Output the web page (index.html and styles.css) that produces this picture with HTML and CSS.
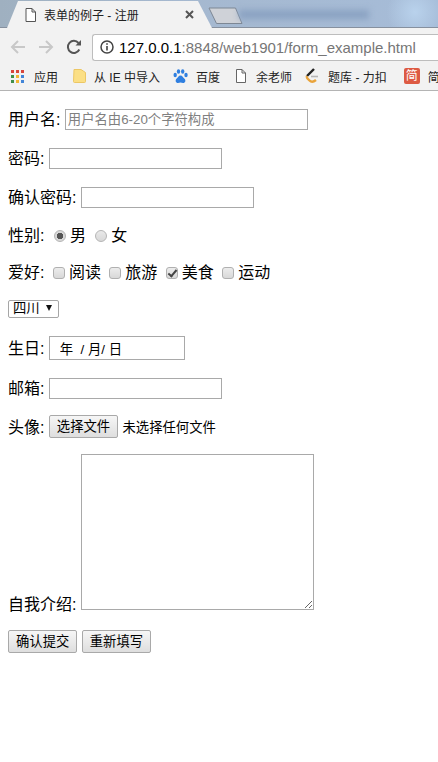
FILE: index.html
```html
<!DOCTYPE html>
<html lang="zh-CN">
<head>
    <meta charset="UTF-8">
    <meta name="viewport" content="width=device-width, initial-scale=1.0">
    <title>表单的例子 - 注册</title>
    <link rel="stylesheet" href="styles.css">
</head>
<body>
    <div class="tabstrip">
        <div class="tab">
            <svg class="tab-icon" width="11" height="14" viewBox="0 0 11 14"><path d="M1 .5h6l3.500 3.500v9.500h-9.500z M7 .5v3.500h3.500" fill="#fff" stroke="#555"/></svg>
            <span class="tab-title">表单的例子 - 注册</span>
            <svg class="tab-close" width="9" height="9" viewBox="0 0 9 9"><path d="M1 1l7 7M8 1l-7 7" stroke="#555" stroke-width="2"/></svg>
        </div>
        <svg class="new-tab" width="35" height="18" viewBox="0 0 35 18"><path d="M1 1h26.500L34 16.500H8.500z" fill="#cfd2d8" stroke="#7d8794"/></svg>
        <div class="blur-title"></div>
    </div>

    <div class="toolbar">
        <svg class="nav-icon" width="16" height="16" viewBox="0 0 16 16"><path d="M15 8H2.500M8 2L2 8l6 6" fill="none" stroke="#c8c8c8" stroke-width="2"/></svg>
        <svg class="nav-icon" width="16" height="16" viewBox="0 0 16 16"><path d="M1 8h12.500M8 2l6 6-6 6" fill="none" stroke="#c8c8c8" stroke-width="2"/></svg>
        <svg class="nav-icon nav-reload" width="16" height="16" viewBox="0 0 16 16"><path d="M13.300 10.500A6 6 0 1 1 12.500 4" fill="none" stroke="#555" stroke-width="2"/><path d="M9.500 6.500H15V1z" fill="#555"/></svg>
        <div class="omnibox">
            <svg class="info-icon" width="14" height="14" viewBox="0 0 14 14"><circle cx="7" cy="7" r="6" fill="none" stroke="#444" stroke-width="1.500"/><path d="M7 6v4.500M7 3.200v1.600" stroke="#444" stroke-width="1.600"/></svg>
            <span class="url"><span class="url-host">127.0.0.1</span>:8848/web1901/form_example.html</span>
        </div>
    </div>

    <div class="bookmarks">
        <div class="bookmark apps">
            <svg width="13" height="13" viewBox="0 0 13 13">
                <rect width="3" height="3" fill="#d9463b"/><rect x="5" width="3" height="3" fill="#d9463b"/><rect x="10" width="3" height="3" fill="#d9463b"/>
                <rect y="5" width="3" height="3" fill="#3f8f4a"/><rect x="5" y="5" width="3" height="3" fill="#f2b632"/><rect x="10" y="5" width="3" height="3" fill="#4285d8"/>
                <rect y="10" width="3" height="3" fill="#3f8f4a"/><rect x="5" y="10" width="3" height="3" fill="#f2b632"/><rect x="10" y="10" width="3" height="3" fill="#4285d8"/>
            </svg>
            <span>应用</span>
        </div>
        <div class="bookmark folder">
            <svg width="13" height="15" viewBox="0 0 13 15"><path d="M1 .5h7l4.500 3v9a1 1 0 0 1-1 1H1.500a1 1 0 0 1-1-1z" fill="#fbdf85" stroke="#ecc765"/></svg>
            <span>从 IE 中导入</span>
        </div>
        <div class="bookmark baidu">
            <svg width="15" height="15" viewBox="0 0 15 15" fill="#2f7fe0"><ellipse cx="2.200" cy="6" rx="1.700" ry="2.200"/><ellipse cx="5.500" cy="2.500" rx="1.700" ry="2.300"/><ellipse cx="9.700" cy="2.500" rx="1.700" ry="2.300"/><ellipse cx="13" cy="6" rx="1.700" ry="2.200"/><path d="M7.500 6.500c-2 0-2.500 2-4 3.200C2 11 2.500 14 5 14c1 0 1.600-.4 2.500-.4s1.500.4 2.500.4c2.500 0 3-3 1.500-4.300-1.500-1.200-2-3.200-4-3.200z"/></svg>
            <span>百度</span>
        </div>
        <div class="bookmark page">
            <svg width="10" height="14" viewBox="0 0 10 14"><path d="M.5.500h5.500l3.500 3.500v9.500h-9z M6 .5V4h3.500" fill="#fff" stroke="#666"/></svg>
            <span>余老师</span>
        </div>
        <div class="bookmark leetcode">
            <svg width="14" height="16" viewBox="0 0 14 16" fill="none"><path d="M9 1L2 8" stroke="#222" stroke-width="2.400"/><path d="M2 8c0 0-.5 1 .5 2.500l2 2c1.500 1.500 4 1.500 6.500-.5" stroke="#e9a33a" stroke-width="2.400"/><path d="M6 8.500h7" stroke="#b5b5b5" stroke-width="1.600"/></svg>
            <span>题库 - 力扣</span>
        </div>
        <div class="bookmark jian">
            <span class="jian-icon">简</span>
            <span>简</span>
        </div>
    </div>

    <form class="signup">
        <p class="row row-text"><label for="username">用户名:</label><input class="field field-wide" type="text" id="username" placeholder="用户名由6-20个字符构成"></p>
        <p class="row row-text"><label for="password">密码:</label><input class="field" type="password" id="password"></p>
        <p class="row row-text"><label for="confirm">确认密码:</label><input class="field" type="password" id="confirm"></p>
        <p class="row row-check">性别: <input class="radio" type="radio" name="sex" checked>男 <input class="radio" type="radio" name="sex">女</p>
        <p class="row row-check">爱好: <input class="check" type="checkbox">阅读 <input class="check" type="checkbox">旅游 <input class="check" type="checkbox" checked>美食 <input class="check" type="checkbox">运动</p>
        <p class="row row-select">
            <span class="select-wrap">
                <select class="province">
                    <option>四川</option>
                    <option>北京</option>
                </select>
            </span>
        </p>
        <p class="row row-date"><label for="birthday">生日:</label><input class="field field-date" type="text" id="birthday" value="年  / 月/ 日"></p>
        <p class="row row-text row-email"><label for="email">邮箱:</label><input class="field" type="email" id="email"></p>
        <p class="row row-file"><span class="file-label">头像:</span><button class="btn" type="button">选择文件</button><span class="file-name">未选择任何文件</span></p>
        <p class="row row-intro"><label for="intro">自我介绍:</label> <textarea class="intro" id="intro"></textarea></p>
        <p class="row row-buttons"><button class="btn" type="submit">确认提交</button> <button class="btn" type="reset">重新填写</button></p>
    </form>
</body>
</html>
```
FILE: styles.css
```css
html, body {
    height: 100%;
}
body {
    margin: 0;
    overflow: hidden;
    background-color: #fff;
    color: #000;
    font-family: "Liberation Sans", "Noto Sans CJK SC", sans-serif;
    font-size: 16px;
}

/* browser frame */
.tabstrip {
    display: flex;
    height: 28px;
    overflow: hidden;
    background:
        radial-gradient(circle at 415px 12px, #b9d2ec 0, rgba(185, 210, 236, 0) 28px),
        linear-gradient(90deg, #9fb0c0 0%, #a5b8cf 40%, #a6bcd8 100%);
    box-shadow: inset 0 -1px 0 #86909e;
}
.tab {
    display: flex;
    align-items: center;
    flex: none;
    box-sizing: border-box;
    width: 205px;
    margin-left: 7px;
    margin-top: 1px;
    padding-left: 18px;
    background-color: #f2f2f2;
    clip-path: polygon(0 100%, 11px 0, 191px 0, 100% 100%);
}
.tab-icon {
    flex: none;
}
.tab-title {
    margin-left: 8px;
    font-size: 12px;
    white-space: nowrap;
    color: #222;
}
.tab-close {
    margin-left: auto;
    margin-right: 18px;
}
.new-tab {
    flex: none;
    margin: 7px 0 0 -4px;
}
.blur-title {
    flex: none;
    width: 130px;
    height: 9px;
    margin: 10px 0 0 -4px;
    background-color: #8aa2c2;
    filter: blur(3px);
}
.toolbar {
    display: flex;
    align-items: center;
    box-sizing: border-box;
    height: 34px;
    padding: 4px 0 0 10px;
    background-color: #f2f2f2;
}
.nav-icon {
    flex: none;
    margin-right: 12px;
}
.nav-reload {
    margin-right: 10px;
}
.omnibox {
    display: flex;
    align-items: center;
    flex: none;
    box-sizing: border-box;
    width: 346px;
    height: 27px;
    padding-left: 7px;
    background-color: #fff;
    border: 1px solid #bdbdbd;
    border-right: none;
    border-radius: 3px 0 0 3px;
}
.info-icon {
    flex: none;
}
.url {
    margin-left: 5px;
    font-size: 15px;
    color: #767676;
    white-space: nowrap;
}
.url-host {
    color: #000;
}
.bookmarks {
    display: flex;
    align-items: center;
    box-sizing: border-box;
    height: 29px;
    overflow: hidden;
    background-color: #f2f2f2;
    border-bottom: 1px solid #b4b4b4;
    font-size: 12px;
    color: #222;
    white-space: nowrap;
}
.bookmark {
    display: flex;
    align-items: center;
    flex: none;
}
.apps {
    margin-left: 11px;
    gap: 10px;
}
.folder {
    margin-left: 15px;
    gap: 8px;
}
.baidu {
    margin-left: 13px;
    gap: 8px;
}
.page {
    margin-left: 16px;
    gap: 10px;
}
.leetcode {
    margin-left: 13px;
    gap: 9px;
}
.jian {
    margin-left: 17px;
    gap: 8px;
}
.jian-icon {
    width: 16px;
    height: 16px;
    border-radius: 2px;
    background-color: #dd5a43;
    color: #fff;
    font-size: 12px;
    line-height: 16px;
    text-align: center;
}

/* the form itself */
.signup {
    padding: 18px 8px 0;
}
.row {
    display: block;
    margin: 0 0 18px;
    white-space: nowrap;
}
.row-text, .row-date, .row-file {
    display: flex;
    align-items: center;
    gap: 4.400px;
}
.row-text label {
    margin-bottom: 3px;
}
.row-date label, .file-label {
    margin-bottom: 2px;
}
.row-text {
    height: 21px;
}
.row-email {
    margin-bottom: 16px;
}
.row-check {
    height: 19px;
    line-height: 19px;
}
.row-select {
    height: 18px;
    line-height: 18px;
}
.row-date {
    height: 24px;
}
.row-file {
    height: 23px;
    margin-bottom: 16px;
}
.row-intro {
    height: 156px;
    margin-bottom: 20px;
}
.row-buttons {
    height: 23px;
}
.field {
    box-sizing: border-box;
    width: 173px;
    height: 21px;
    padding: 1px 2px;
    border: 1px solid #a9a9a9;
    border-radius: 0;
    outline: none;
    font-family: inherit;
    font-size: 13.333px;
}
.field::placeholder {
    color: #808080;
}
.field-wide {
    width: 243px;
}
.field-date {
    width: 136px;
    height: 24px;
    padding-left: 10px;
}
.radio {
    appearance: none;
    box-sizing: border-box;
    width: 12px;
    height: 12px;
    margin: 0 4px 0 5px;
    border: 1px solid #b5b5b5;
    border-radius: 50%;
    background: linear-gradient(#e9e9e9, #d8d8d8);
    vertical-align: -1px;
}
.radio:checked {
    background: radial-gradient(circle, #555 0 3px, #d8d8d8 3.500px);
}
.check {
    appearance: none;
    position: relative;
    box-sizing: border-box;
    width: 12px;
    height: 12px;
    margin: 0 4px;
    border: 1px solid #b0b0b0;
    border-radius: 3px;
    background: linear-gradient(#ececec, #d8d8d8);
    vertical-align: -1px;
}
.check:checked::after {
    content: "";
    position: absolute;
    left: 3px;
    top: 0;
    width: 3px;
    height: 7px;
    border: solid #444;
    border-width: 0 2px 2px 0;
    transform: rotate(40deg);
}
.select-wrap {
    position: relative;
    display: inline-block;
    height: 18px;
    vertical-align: top;
}
.select-wrap::after {
    content: "";
    position: absolute;
    left: 38px;
    top: 5px;
    border-style: solid;
    border-width: 6px 3.500px 0;
    border-color: #111 transparent transparent;
}
.province {
    appearance: none;
    display: block;
    box-sizing: border-box;
    width: 51px;
    height: 18px;
    padding: 0 0 0 4px;
    background-color: #fff;
    border: 1px solid #a6a6a6;
    border-radius: 2px;
    font-family: inherit;
    font-size: 13.333px;
    line-height: 16px;
    color: #000;
}
.btn {
    box-sizing: border-box;
    height: 23px;
    padding: 0 7px;
    border: 1px solid #a9a9a9;
    border-radius: 2px;
    background: linear-gradient(#f6f6f6, #dedede);
    font-family: inherit;
    font-size: 13.333px;
    line-height: 20px;
    color: #000;
    vertical-align: top;
}
.file-name {
    font-size: 13.333px;
}
.intro {
    box-sizing: border-box;
    width: 233px;
    height: 156px;
    margin: 0;
    padding: 2px;
    border: 1px solid #a9a9a9;
    border-radius: 0;
    outline: none;
    vertical-align: baseline;
}
```
